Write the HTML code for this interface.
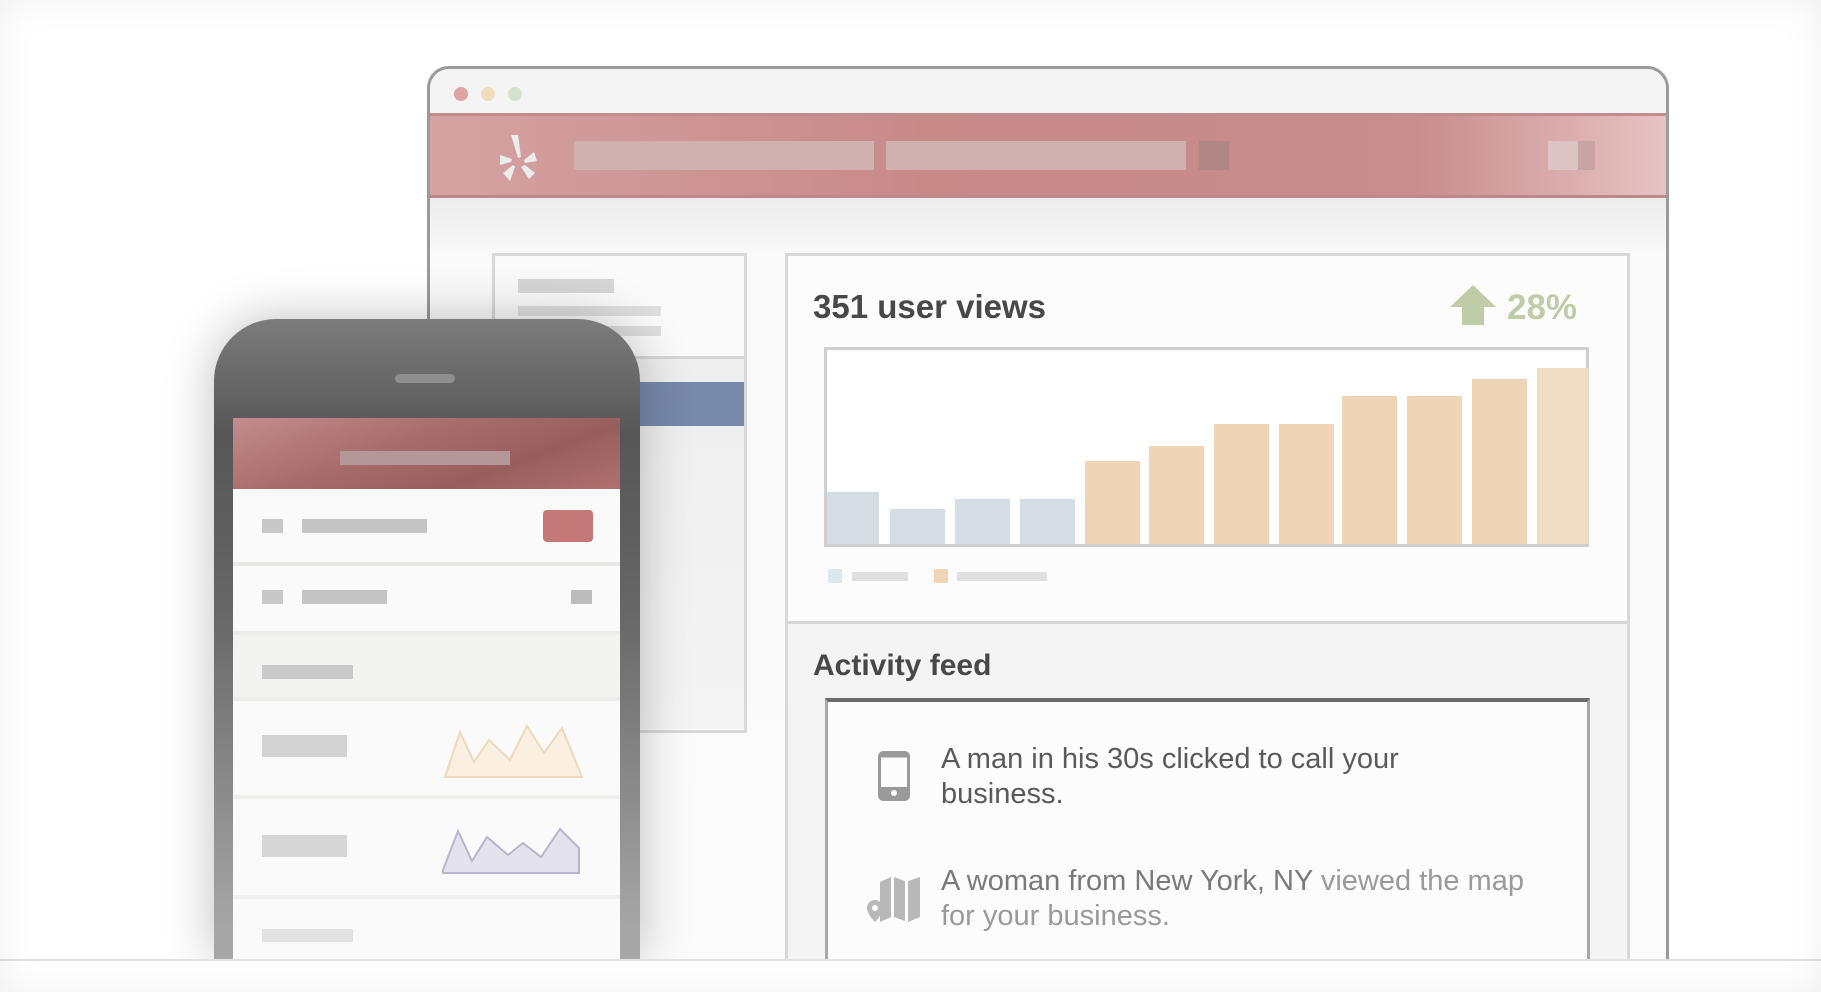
<!DOCTYPE html>
<html style="overflow:hidden;width:1821px;height:992px"><head><meta charset="utf-8"><style>
*{margin:0;padding:0;box-sizing:border-box}
body{width:1821px;height:992px;overflow:hidden;background:#fff;font-family:"Liberation Sans",Arial,sans-serif;position:relative}
.a{position:absolute}
.vig{position:absolute;inset:0;box-shadow:inset 0 0 40px rgba(0,0,0,.06);pointer-events:none}
</style></head><body>
<div class="a" style="left:0;top:0;width:1821px;height:992px;overflow:hidden">
<div class="a" style="left:427px;top:66px;width:1242px;height:920px;border:3px solid #9a9a9a;border-bottom:none;border-radius:22px 22px 0 0;background:#f5f5f5;overflow:hidden">
  <div class="a" style="left:0;top:0;right:0;height:44px;background:#f4f4f4"></div>
  <div class="a" style="left:24px;top:18px;width:14px;height:14px;border-radius:50%;background:#dea4a4"></div>
  <div class="a" style="left:51px;top:18px;width:14px;height:14px;border-radius:50%;background:#f1dcc0"></div>
  <div class="a" style="left:78px;top:18px;width:14px;height:14px;border-radius:50%;background:#d3e4cc"></div>
  <div class="a" style="left:0;top:44px;right:0;height:85px;background:linear-gradient(90deg,#d5a2a2,#c88989 40%,#c98d8d 80%,#e6c3c3);border-top:3px solid #c08c8c;border-bottom:3px solid #bf8888"></div>
  <svg class="a" style="left:70px;top:64px" width="40" height="52" viewBox="0 0 40 52"><g fill="#ececec"><path d="M11 2l7 0 3 22-3 1z"/><path d="M0 22l12 4-1 3-11 3z"/><path d="M3 40l10-8 2 2-5 14z"/><path d="M21 34l4-2 10 8-6 6z"/><path d="M24 27l10-8 3 9-12 2z"/></g></svg>
  <div class="a" style="left:144px;top:72px;width:300px;height:29px;background:#d1b0b0"></div>
  <div class="a" style="left:456px;top:72px;width:300px;height:29px;background:#d1b0b0"></div>
  <div class="a" style="left:769px;top:72px;width:30px;height:29px;background:#b08686"></div>
  <div class="a" style="left:1118px;top:72px;width:30px;height:29px;background:#dcc4c4"></div>
  <div class="a" style="left:1148px;top:72px;width:17px;height:29px;background:#c8a4a4"></div>
  <div class="a" style="left:0;top:129px;right:0;height:800px;background:linear-gradient(#ececec,#fafafa 60px,#fbfbfb)"></div>
  <div class="a" style="left:62px;top:184px;width:255px;height:480px;border:3px solid #d8d8d8;background:#fafafa">
    <div class="a" style="left:23px;top:23px;width:96px;height:14px;background:#d6d6d6"></div>
    <div class="a" style="left:23px;top:50px;width:143px;height:10px;background:#dedede"></div>
    <div class="a" style="left:23px;top:70px;width:143px;height:10px;background:#dedede"></div>
    <div class="a" style="left:0;top:100px;right:0;height:3px;background:#d6d6d6"></div>
    <div class="a" style="left:0;top:103px;right:0;height:370px;background:linear-gradient(#eeeeee,#f4f4f4)"></div>
    <div class="a" style="left:0;top:126px;right:0;height:44px;background:#7888aa"></div>
  </div>
  <div class="a" style="left:355px;top:184px;width:845px;height:760px;border:3px solid #d8d8d8;background:#fbfbfb">
    <div class="a" style="left:0;top:0;right:0;height:367px;background:#fcfcfc"></div>
    <div class="a" style="left:25px;top:32px;font-size:33px;font-weight:bold;color:#484848">351 user views</div>
    <svg class="a" style="left:661px;top:29px" width="48" height="40" viewBox="0 0 48 40"><path d="M24 0L47 22H35V40H13V22H1z" fill="#c0cca8"/></svg>
    <div class="a" style="left:719px;top:32px;font-size:35px;font-weight:bold;color:#c0cca8">28%</div>
    <div class="a" style="left:36px;top:91px;width:765px;height:200px;border:3px solid #cfcfcf;background:#fff">
      <div class="a" style="left:0;bottom:0;width:52px;height:52px;background:#d4dde3"></div>
      <div class="a" style="left:63px;bottom:0;width:55px;height:35px;background:#d4dde3"></div>
      <div class="a" style="left:128px;bottom:0;width:55px;height:45px;background:#d4dde3"></div>
      <div class="a" style="left:193px;bottom:0;width:55px;height:45px;background:#d4dde3"></div>
      <div class="a" style="left:258px;bottom:0;width:55px;height:83px;background:#efd4b6"></div>
      <div class="a" style="left:322px;bottom:0;width:55px;height:98px;background:#efd4b6"></div>
      <div class="a" style="left:387px;bottom:0;width:55px;height:120px;background:#efd4b6"></div>
      <div class="a" style="left:452px;bottom:0;width:55px;height:120px;background:#efd4b6"></div>
      <div class="a" style="left:515px;bottom:0;width:55px;height:148px;background:#efd4b6"></div>
      <div class="a" style="left:580px;bottom:0;width:55px;height:148px;background:#efd4b6"></div>
      <div class="a" style="left:645px;bottom:0;width:55px;height:165px;background:#efd4b6"></div>
      <div class="a" style="left:710px;bottom:0;width:52px;height:176px;background:#efdcc2"></div>
    </div>
    <div class="a" style="left:40px;top:313px;width:14px;height:14px;background:#dce6ee"></div>
    <div class="a" style="left:64px;top:316px;width:56px;height:9px;background:#e0e0e0"></div>
    <div class="a" style="left:146px;top:313px;width:14px;height:14px;background:#efd4b6"></div>
    <div class="a" style="left:169px;top:316px;width:90px;height:9px;background:#e0e0e0"></div>
    <div class="a" style="left:0;top:365px;right:0;height:3px;background:#d6d6d6"></div>
    <div class="a" style="left:0;top:368px;right:0;bottom:0;background:#f4f4f4"></div>
    <div class="a" style="left:25px;top:393px;font-size:30px;font-weight:bold;color:#484848">Activity feed</div>
    <div class="a" style="left:37px;top:442px;width:765px;height:320px;border:3px solid #a8a8a8;border-top:4px solid #6a6a6a;background:#fcfcfc">
      <svg class="a" style="left:50px;top:49px" width="32" height="50" viewBox="0 0 32 50"><rect x="1.5" y="1.5" width="29" height="47" rx="4" fill="none" stroke="#9a9a9a" stroke-width="3"/><rect x="1.5" y="36" width="29" height="12" fill="#9a9a9a"/><circle cx="16" cy="42" r="3" fill="#fff"/><rect x="1.5" y="1.5" width="29" height="5" fill="#9a9a9a"/></svg>
      <div class="a" style="left:113px;top:40px;font-size:29px;line-height:35px;color:#5a5a5a;width:550px">A man in his 30s clicked to call your business.</div>
      <svg class="a" style="left:38px;top:172px" width="60" height="52" viewBox="0 0 60 52"><g fill="#b8b8b8"><path d="M14 8l11-5v40l-11 5z"/><path d="M28 3l11 4v40l-11-4z"/><path d="M42 7l12-4v40l-12 5z"/><path d="M9 26a8 8 0 0 1 8 8c0 6-8 14-8 14s-8-8-8-14a8 8 0 0 1 8-8z"/></g><circle cx="9" cy="34" r="3" fill="#fff"/></svg>
      <div class="a" style="left:113px;top:162px;font-size:29px;line-height:35px;color:#7a7a7a;width:600px">A woman from New York, NY <span style="color:#9a9a9a">viewed the map for your business.</span></div>
    </div>
  </div>
</div>
<div class="a" style="left:214px;top:319px;width:426px;height:640px;border-radius:62px 62px 0 0;background:linear-gradient(#7c7c7c,#565656 18%,#666 45%,#a6a6a6 95%);box-shadow:0 0 50px rgba(0,0,0,.25)">
  <div class="a" style="left:181px;top:55px;width:60px;height:9px;border-radius:5px;background:#8f8f8f"></div>
  <div class="a" style="left:19px;top:99px;width:387px;height:541px;background:#fafafa;overflow:hidden">
    <div class="a" style="left:0;top:0;right:0;height:71px;background:linear-gradient(160deg,#c48d8d,#a86c6c 40%,#985e5e 70%,#b07070)"></div>
    <div class="a" style="left:107px;top:33px;width:170px;height:14px;background:#b49898"></div>
    <div class="a" style="left:29px;top:101px;width:21px;height:14px;background:#c8c8c8"></div>
    <div class="a" style="left:69px;top:101px;width:125px;height:14px;background:#c4c4c4"></div>
    <div class="a" style="left:310px;top:92px;width:50px;height:32px;border-radius:4px;background:#c47878"></div>
    <div class="a" style="left:0;top:144px;right:0;height:4px;background:#e8e8e6"></div>
    <div class="a" style="left:29px;top:172px;width:21px;height:14px;background:#c8c8c8"></div>
    <div class="a" style="left:69px;top:172px;width:85px;height:14px;background:#c4c4c4"></div>
    <div class="a" style="left:338px;top:172px;width:21px;height:14px;background:#bcbcbc"></div>
    <div class="a" style="left:0;top:213px;right:0;height:4px;background:#ececea"></div>
    <div class="a" style="left:0;top:217px;right:0;height:62px;background:#f3f3f2"></div>
    <div class="a" style="left:29px;top:247px;width:91px;height:14px;background:#cacaca"></div>
    <div class="a" style="left:0;top:279px;right:0;height:4px;background:#ececea"></div>
    <div class="a" style="left:29px;top:317px;width:85px;height:22px;background:#d2d2d2"></div>
    <svg class="a" style="left:210px;top:302px" width="145" height="60" viewBox="0 0 145 60"><path d="M2 57L17 12 31 42 46 20 67 40 84 6 101 33 119 8 139 57z" fill="#faefe0" stroke="#f0d8b8" stroke-width="2"/></svg>
    <div class="a" style="left:0;top:377px;right:0;height:4px;background:#efefed"></div>
    <div class="a" style="left:29px;top:417px;width:85px;height:22px;background:#d6d6d6"></div>
    <svg class="a" style="left:208px;top:408px" width="150" height="50" viewBox="0 0 150 50"><path d="M2 44L17 5 31 35 46 11 67 29 82 17 100 31 119 3 138 22V47H2z" fill="#e4e2ea" stroke="#b8b4d0" stroke-width="2"/></svg>
    <div class="a" style="left:0;top:477px;right:0;height:4px;background:#f0f0ee"></div>
    <div class="a" style="left:29px;top:511px;width:91px;height:13px;background:#e2e2e2"></div>
  </div>
</div>
<div class="a" style="left:0;top:959px;width:1821px;height:33px;background:#fff;border-top:2px solid #e2e2e2"></div>
<div class="vig"></div>
</div>
</body></html>
